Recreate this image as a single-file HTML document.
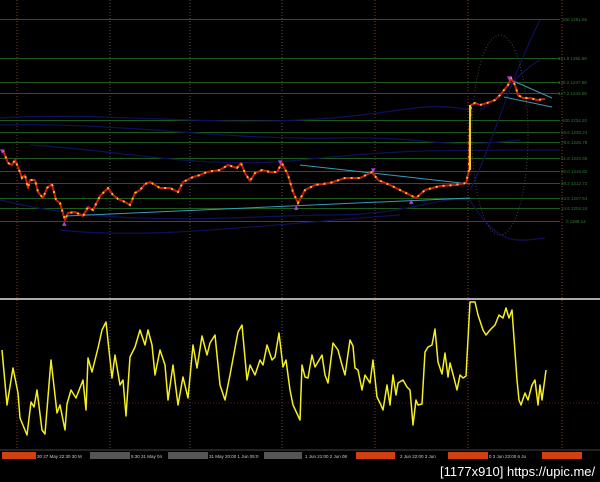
<!DOCTYPE html>
<html><head><style>
html,body{margin:0;padding:0;background:#000;}
svg{display:block;}
text{font-family:"Liberation Sans",sans-serif;}
</style></head><body>
<svg width="600" height="482" viewBox="0 0 600 482" xmlns="http://www.w3.org/2000/svg">
<rect width="600" height="482" fill="#000"/>
<g stroke-dasharray="1,2" stroke-width="1">
<line x1="17" y1="0" x2="17" y2="450" stroke="#8a3a1a"/>
<line x1="110" y1="0" x2="110" y2="450" stroke="#555"/>
<line x1="190" y1="0" x2="190" y2="450" stroke="#555"/>
<line x1="282" y1="0" x2="282" y2="450" stroke="#555"/>
<line x1="375" y1="0" x2="375" y2="450" stroke="#8a3a1a"/>
<line x1="468" y1="0" x2="468" y2="450" stroke="#8a3a1a"/>
<line x1="562" y1="0" x2="562" y2="450" stroke="#8a3a1a"/>
</g>
<g stroke="#1f5a1f" stroke-width="1">
<line x1="0" y1="19.5" x2="560" y2="19.5"/>
<line x1="0" y1="58.5" x2="560" y2="58.5"/>
<line x1="0" y1="82.5" x2="560" y2="82.5"/>
<line x1="0" y1="93.5" x2="560" y2="93.5"/>
<line x1="0" y1="120.5" x2="560" y2="120.5"/>
<line x1="0" y1="132.5" x2="560" y2="132.5"/>
<line x1="0" y1="142.5" x2="560" y2="142.5"/>
<line x1="0" y1="158.5" x2="560" y2="158.5"/>
<line x1="0" y1="171.5" x2="560" y2="171.5"/>
<line x1="0" y1="183.5" x2="560" y2="183.5"/>
<line x1="0" y1="198.5" x2="560" y2="198.5"/>
<line x1="0" y1="208.5" x2="560" y2="208.5"/>
<line x1="0" y1="221.5" x2="560" y2="221.5"/>
</g>
<g fill="#2f7a2f" font-size="4.5">
<text x="562" y="21">100 1261.56</text><text x="558" y="60">161.8 1255.68</text>
<text x="558" y="84">138.2 1247.58</text><text x="558" y="95">127.2 1243.68</text>
<text x="562" y="122">100 1234.20</text><text x="561" y="134">88.6 1230.24</text>
<text x="561" y="144">78.6 1226.78</text><text x="561" y="160">61.8 1220.95</text>
<text x="561" y="173">50.0 1216.82</text><text x="561" y="185">38.2 1212.72</text>
<text x="561" y="200">23.6 1207.64</text><text x="561" y="210">14.6 1204.24</text>
<text x="566" y="223">0 1199.14</text>
</g>
<g fill="none" stroke="#10105a" stroke-width="1.2">
<path d="M0 118 C100 112 200 125 300 120 S420 100 470 110"/>
<path d="M0 125 C120 122 220 140 330 138 S430 150 520 140"/>
<path d="M30 145 C120 150 200 170 300 160 S420 150 560 150"/>
<path d="M0 200 C120 230 250 215 330 215 S440 195 470 200"/>
<path d="M60 230 C150 240 260 225 400 215"/>
<path d="M470 190 C490 150 510 80 540 20"/>
<path d="M470 200 C500 250 520 240 545 238"/>
<path d="M480 110 C500 100 520 70 540 60"/>
</g>
<ellipse cx="500" cy="135" rx="28" ry="100" fill="none" stroke="#444" stroke-dasharray="1,2"/>
<g stroke="#3a9ab8" stroke-width="1" fill="none">
<line x1="66" y1="216" x2="470" y2="198"/>
<line x1="300" y1="165" x2="470" y2="184"/>
<line x1="511" y1="80" x2="552" y2="98"/>
<line x1="504" y1="97" x2="552" y2="107"/>
</g>
<polyline fill="none" stroke="#d01a10" stroke-width="2" stroke-linejoin="round" points="3,150 8,163 12,165 15,160 18,167 22,178 25,175 28,188 30,180 35,180 38,192 43,198 47,188 52,184 56,200 60,203 65,220 68,213 75,212 83,216 88,207 93,210 100,196 108,188 113,195 118,199 125,202 130,205 135,193 140,190 145,184 150,182 155,185 160,188 170,188 178,192 183,182 193,177 200,175 207,172 213,171 220,170 228,165 237,168 241,163 245,173 250,181 255,173 262,170 270,172 277,172 282,163 288,175 293,192 298,203 305,190 315,185 330,183 345,178 360,178 372,172 378,180 390,185 400,190 412,196 416,198 425,190 440,186 455,185 466,183 469,170 470,120 471,105 475,103 480,105 487,103 495,100 500,95 504,90 508,85 511,78 515,85 518,95 523,98 530,98 537,100 545,99"/>
<polyline fill="none" stroke="#f0c020" stroke-width="2" stroke-dasharray="2,5" points="3,150 8,163 12,165 15,160 18,167 22,178 25,175 28,188 30,180 35,180 38,192 43,198 47,188 52,184 56,200 60,203 65,220 68,213 75,212 83,216 88,207 93,210 100,196 108,188 113,195 118,199 125,202 130,205 135,193 140,190 145,184 150,182 155,185 160,188 170,188 178,192 183,182 193,177 200,175 207,172 213,171 220,170 228,165 237,168 241,163 245,173 250,181 255,173 262,170 270,172 277,172 282,163 288,175 293,192 298,203 305,190 315,185 330,183 345,178 360,178 372,172 378,180 390,185 400,190 412,196 416,198 425,190 440,186 455,185 466,183 469,170 470,120 471,105 475,103 480,105 487,103 495,100 500,95 504,90 508,85 511,78 515,85 518,95 523,98 530,98 537,100 545,99"/>
<line x1="470" y1="170" x2="470" y2="105" stroke="#f0d020" stroke-width="2"/>
<g fill="#b040e0" font-size="9">
<text x="0" y="154">▾</text><text x="62" y="226">▴</text><text x="278" y="165">▾</text>
<text x="294" y="210">▴</text><text x="371" y="173">▾</text><text x="409" y="204">▴</text><text x="507" y="81">▾</text>
</g>
<line x1="0" y1="299" x2="600" y2="299" stroke="#aaa" stroke-width="2"/>
<line x1="0" y1="403" x2="600" y2="403" stroke="#5a1a1a" stroke-dasharray="1,2"/>
<polyline fill="none" stroke="#f5ee20" stroke-width="1.5" stroke-linejoin="round" points="2,350 7,405 13,368 18,393 20,418 27,435 31,402 34,407 37,390 42,430 45,434 51,360 57,413 60,405 65,430 67,404 71,390 76,398 83,380 86,410 88,358 92,372 98,348 102,330 106,322 112,378 115,355 120,385 123,380 126,416 130,357 135,347 140,330 145,345 148,330 152,345 155,375 160,350 165,365 168,400 173,365 178,405 183,377 188,398 193,345 197,368 202,336 207,355 210,343 215,335 220,385 225,400 230,375 235,348 238,332 242,325 247,380 250,365 255,375 260,360 263,365 267,345 272,360 275,357 279,333 283,367 286,360 290,390 293,405 300,420 302,365 305,377 308,378 312,355 315,367 318,362 322,355 325,375 328,383 333,343 338,350 342,365 345,375 350,340 353,346 355,368 358,370 362,390 365,375 370,383 373,360 377,397 380,403 383,410 387,385 390,405 393,375 396,395 398,383 403,380 407,387 410,390 413,425 416,400 418,405 422,404 425,352 428,347 432,345 435,329 438,362 442,374 445,353 448,377 450,363 454,378 457,390 460,375 463,378 466,376 470,302 475,302 478,315 483,330 486,335 490,330 495,325 499,315 503,318 506,308 509,318 512,310 517,380 519,400 521,405 525,393 528,400 532,385 535,380 538,405 540,385 542,400 546,370"/>
<line x1="0" y1="450" x2="600" y2="450" stroke="#444"/>
<g fill="#d04010"><rect x="2" y="452" width="34" height="7"/><rect x="356" y="452" width="39" height="7"/><rect x="448" y="452" width="40" height="7"/><rect x="542" y="452" width="40" height="7"/></g>
<g fill="#555"><rect x="90" y="452" width="40" height="7"/><rect x="168" y="452" width="40" height="7"/><rect x="264" y="452" width="38" height="7"/></g>
<g fill="#ccc" font-size="4.5">
<text x="37" y="458">30 27 May 22:30 30 M</text><text x="131" y="458">5:30 31 May 04</text>
<text x="209" y="458">31 May 20:00 1 Jun 05:0</text><text x="305" y="458">1 Jun 21:00  2 Jun 08</text>
<text x="400" y="458">2 Jun 22:00  3 Jun</text><text x="489" y="458">0  3 Jun 23:00 6 Ju</text>
</g>
<text x="440" y="476" fill="#fff" font-size="13">[1177x910] https://upic.me/</text>
</svg>
</body></html>
